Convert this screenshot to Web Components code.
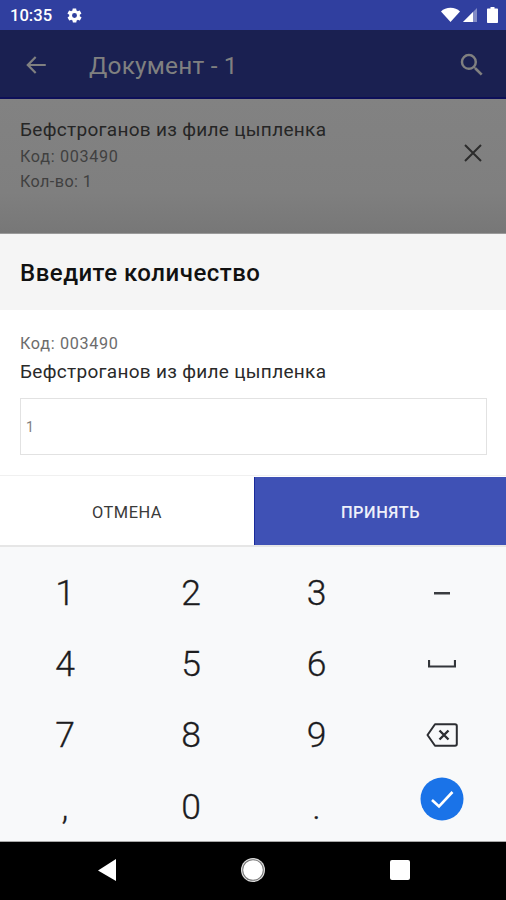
<!DOCTYPE html>
<html lang="ru">
<head>
<meta charset="utf-8">
<title>Документ - 1</title>
<style>
  html, body { margin: 0; padding: 0; background: #000; }
  body { width: 506px; height: 900px; overflow: hidden; font-family: Roboto, "Liberation Sans", sans-serif; }
</style>
</head>
<body>
<status-bar></status-bar>
<app-bar title="Документ - 1"></app-bar>
<dim-item name="Бефстроганов из филе цыпленка" code="003490" qty="1"></dim-item>
<qty-dialog name="Бефстроганов из филе цыпленка" code="003490" value="1"></qty-dialog>
<num-keyboard></num-keyboard>
<nav-bar></nav-bar>

<script>
class StatusBar extends HTMLElement {
  constructor() {
    super()
    this.attachShadow({ mode: 'open' }).innerHTML = `
      <style>
        :host {
          display: flex;
          align-items: center;
          height: 30px;
          padding: 0 8px 0 10px;
          background: #303f9f;
          color: #fff;
          font: 500 16.6px Roboto, sans-serif;
        }
        .time { margin-right: 14px; }
        .right { margin-left: auto; display: flex; align-items: center; gap: 2px; }
        svg { display: block; fill: #fff; }
      </style>
      <span class="time">10:35</span>
      <svg width="17" height="17" viewBox="0 0 24 24"><path d="M19.4 13c.1-.3.1-.7.1-1s0-.7-.1-1l2.1-1.6c.2-.2.2-.4.1-.6l-2-3.5c-.1-.2-.4-.3-.6-.2l-2.5 1c-.5-.4-1.1-.7-1.7-1l-.4-2.6c0-.3-.2-.4-.5-.4h-4c-.3 0-.5.2-.5.4l-.4 2.6c-.6.3-1.2.6-1.7 1l-2.5-1c-.2-.1-.5 0-.6.2l-2 3.5c-.1.2-.1.5.1.6L4.6 11c0 .3-.1.7-.1 1s0 .7.1 1l-2.1 1.6c-.2.2-.2.4-.1.6l2 3.5c.1.2.4.3.6.2l2.5-1c.5.4 1.1.7 1.7 1l.4 2.6c0 .2.2.4.5.4h4c.3 0 .5-.2.5-.4l.4-2.6c.6-.3 1.2-.6 1.7-1l2.5 1c.2.1.5 0 .6-.2l2-3.5c.1-.2.1-.5-.1-.6L19.4 13zM12 15.5a3.5 3.5 0 1 1 0-7 3.5 3.5 0 0 1 0 7z"/></svg>
      <div class="right">
        <svg width="19" height="16" viewBox="0 0 19 16"><path d="M0 4.5C2.5 2 5.7.8 9.5.8s7 1.2 9.5 3.7L9.5 15z"/></svg>
        <svg width="15" height="16" viewBox="0 0 15 16"><path d="M15 1v14H1z" fill="#fff" opacity=".4"/><path d="M11 5v10H1z"/></svg>
        <svg width="11" height="16" viewBox="0 0 11 16" style="margin-left:8px"><path d="M3.5 0h4v1.5H10c.6 0 1 .4 1 1V15c0 .6-.4 1-1 1H1c-.6 0-1-.4-1-1V2.500c0-.6.4-1 1-1h2.500z"/></svg>
      </div>`
  }
}

class AppBar extends HTMLElement {
  constructor() {
    super()
    const title = this.getAttribute('title')
    this.attachShadow({ mode: 'open' }).innerHTML = `
      <style>
        :host {
          display: flex;
          align-items: center;
          height: 64px;
          box-sizing: content-box;
          padding: 3px 19px 0 23px;
          background: #1a2051;
          border-bottom: 2px solid #0d0f58;
          color: #808080;
        }
        .t { margin-left: 40px; font: 400 24.4px Roboto, sans-serif; letter-spacing: .2px; }
        svg { display: block; fill: #808080; }
        .s { margin-left: auto; }
      </style>
      <svg width="26" height="26" viewBox="0 0 24 24"><path d="M21 11H6.8l5.6-5.6L11 4l-8 8 8 8 1.4-1.4L6.8 13H21z"/></svg>
      <span class="t">${title}</span>
      <svg class="s" width="30" height="30" viewBox="0 0 24 24"><path d="M15.5 14h-.79l-.28-.27A6.47 6.47 0 0 0 16 9.5 6.5 6.5 0 1 0 9.5 16c1.61 0 3.09-.59 4.23-1.57l.27.28v.79l5 4.99L20.49 19l-4.99-5zm-6 0C7.01 14 5 11.99 5 9.5S7.01 5 9.5 5 14 7.01 14 9.5 11.99 14 9.5 14z"/></svg>`
  }
}

class DimItem extends HTMLElement {
  constructor() {
    super()
    this.attachShadow({ mode: 'open' }).innerHTML = `
      <style>
        :host {
          display: flex;
          align-items: flex-start;
          height: 135px;
          box-sizing: border-box;
          padding: 20px 24px 0 20px;
          background: linear-gradient(#828282, #7f7f7f 70%, #777);
          border-bottom: 1px solid #9a9a9a;
          font-family: Roboto, sans-serif;
        }
        .name { font-size: 19px; line-height: 22px; color: #262626; letter-spacing: .3px; }
        .sub { font-size: 16.2px; line-height: 25px; color: #404040; letter-spacing: .4px; }
        .sub.first { margin-top: 3px; letter-spacing: .67px; }
        .x { margin-left: auto; margin-top: 25px; }
        svg { display: block; stroke: #2c2c2c; stroke-width: 2; fill: none; }
      </style>
      <div>
        <div class="name">${this.getAttribute('name')}</div>
        <div class="sub first">Код: ${this.getAttribute('code')}</div>
        <div class="sub">Кол-во: ${this.getAttribute('qty')}</div>
      </div>
      <svg class="x" width="18" height="18" viewBox="0 0 18 18"><path d="M1 1l16 16M17 1L1 17"/></svg>`
  }
}

class QtyDialog extends HTMLElement {
  constructor() {
    super()
    this.attachShadow({ mode: 'open' }).innerHTML = `
      <style>
        :host {
          display: block;
          background: #fff;
          font-family: Roboto, sans-serif;
        }
        header {
          height: 76px;
          box-sizing: border-box;
          padding: 2px 0 0 20px;
          display: flex;
          align-items: center;
          background: #f5f5f5;
          color: #111;
          font-size: 24px;
          font-weight: 500;
          letter-spacing: .5px;
        }
        .body { padding: 23px 19px 0 20px; height: 165px; box-sizing: border-box; }
        .code { font-size: 16.2px; line-height: 22px; color: #6c6c6c; letter-spacing: .67px; }
        .name { font-size: 19px; line-height: 22px; margin-top: 6px; color: #2a2a2a; letter-spacing: .3px; }
        .field {
          margin-top: 15px;
          height: 57px;
          box-sizing: border-box;
          border: 1px solid #e2e2e2;
          padding-left: 5px;
          display: flex;
          align-items: center;
          font-size: 14px;
          color: #808080;
        }
        .actions {
          display: grid;
          grid-template-columns: 254px 252px;
          height: 72px;
          box-sizing: border-box;
          border-top: 1px solid #f0f0f0;
          border-bottom: 2px solid #e6e6e6;
          font-size: 16.4px;
          letter-spacing: .5px;
        }
        .actions div { display: flex; align-items: center; justify-content: center; padding-top: 3px; }
        .cancel { color: #3a3a3a; }
        .ok {
          background: #3f51b5;
          color: #eef0fa;
          font-weight: 500;
          margin-top: 1px;
          border-left: 1px solid #1a2a9a;
        }
      </style>
      <header>Введите количество</header>
      <div class="body">
        <div class="code">Код: ${this.getAttribute('code')}</div>
        <div class="name">${this.getAttribute('name')}</div>
        <div class="field">${this.getAttribute('value')}</div>
      </div>
      <div class="actions">
        <div class="cancel">ОТМЕНА</div>
        <div class="ok">ПРИНЯТЬ</div>
      </div>`
  }
}

class NumKeyboard extends HTMLElement {
  constructor() {
    super()
    const digits = [['1', '2', '3'], ['4', '5', '6'], ['7', '8', '9'], [',', '0', '.']]
    const side = [
      `<svg width="16" height="4" viewBox="0 0 16 4"><path d="M0 1h16v2.500H0z" fill="#3a3c40"/></svg>`,
      `<svg width="28" height="8" viewBox="0 0 28 8"><path d="M1 0v6.500h26V0" fill="none" stroke="#33363a" stroke-width="2.2"/></svg>`,
      `<svg width="32" height="24" viewBox="0 0 32 24"><path d="M9 1.2h20c1 0 1.8.8 1.8 1.8v18c0 1-.8 1.8-1.800 1.800H9L1.500 12z" fill="none" stroke="#2c2e32" stroke-width="2" stroke-linejoin="round"/><path d="M13.500 7.500l9 9M22.500 7.500l-9 9" fill="none" stroke="#2c2e32" stroke-width="2.4"/></svg>`,
      `<svg width="44" height="44" viewBox="0 0 44 44"><circle cx="22" cy="22" r="21.5" fill="#1a73e8"/><path d="M12 23l7 6.500L32.500 15" fill="none" stroke="#fff" stroke-width="2.6"/></svg>`,
    ]
    const rows = digits.map((r, i) => `
      ${r.map((d) => `<div class="key">${d}</div>`).join('')}
      <div class="key side side${i}">${side[i]}</div>`).join('')
    this.attachShadow({ mode: 'open' }).innerHTML = `
      <style>
        :host {
          display: grid;
          grid-template-columns: 126px 126px 125px 126px;
          grid-auto-rows: 71.3px;
          height: 295px;
          box-sizing: border-box;
          padding: 10px 0 0 2px;
          background: #f8f9fa;
          border-bottom: 1px solid #a8a8a8;
          font-family: Roboto, sans-serif;
        }
        .key {
          display: flex;
          align-items: center;
          justify-content: center;
          font-size: 35.5px;
          font-weight: 300;
          -webkit-text-stroke: .3px #1c1c1e;
          color: #1c1c1e;
        }
        .side3 { margin-top: -15px; }
        svg { display: block; }
      </style>
      ${rows}`
  }
}

class NavBar extends HTMLElement {
  constructor() {
    super()
    this.attachShadow({ mode: 'open' }).innerHTML = `
      <style>
        :host {
          display: flex;
          align-items: center;
          justify-content: center;
          gap: 124.5px;
          height: 56px;
          padding-bottom: 2px;
          background: #000;
        }
        svg { display: block; }
      </style>
      <svg width="20" height="22" viewBox="0 0 20 22"><path d="M19 0v22L1 11.500z" fill="#fff"/></svg>
      <svg width="24" height="24" viewBox="0 0 24 24"><circle cx="12" cy="12" r="12" fill="#ddd"/><circle cx="12" cy="12" r="10.8" fill="#777"/><circle cx="12" cy="12" r="9.8" fill="#fff"/></svg>
      <svg width="20" height="20" viewBox="0 0 20 20"><rect width="20" height="20" rx="2" fill="#fff"/></svg>`
  }
}

customElements.define('status-bar', StatusBar)
customElements.define('app-bar', AppBar)
customElements.define('dim-item', DimItem)
customElements.define('qty-dialog', QtyDialog)
customElements.define('num-keyboard', NumKeyboard)
customElements.define('nav-bar', NavBar)
</script>
</body>
</html>
